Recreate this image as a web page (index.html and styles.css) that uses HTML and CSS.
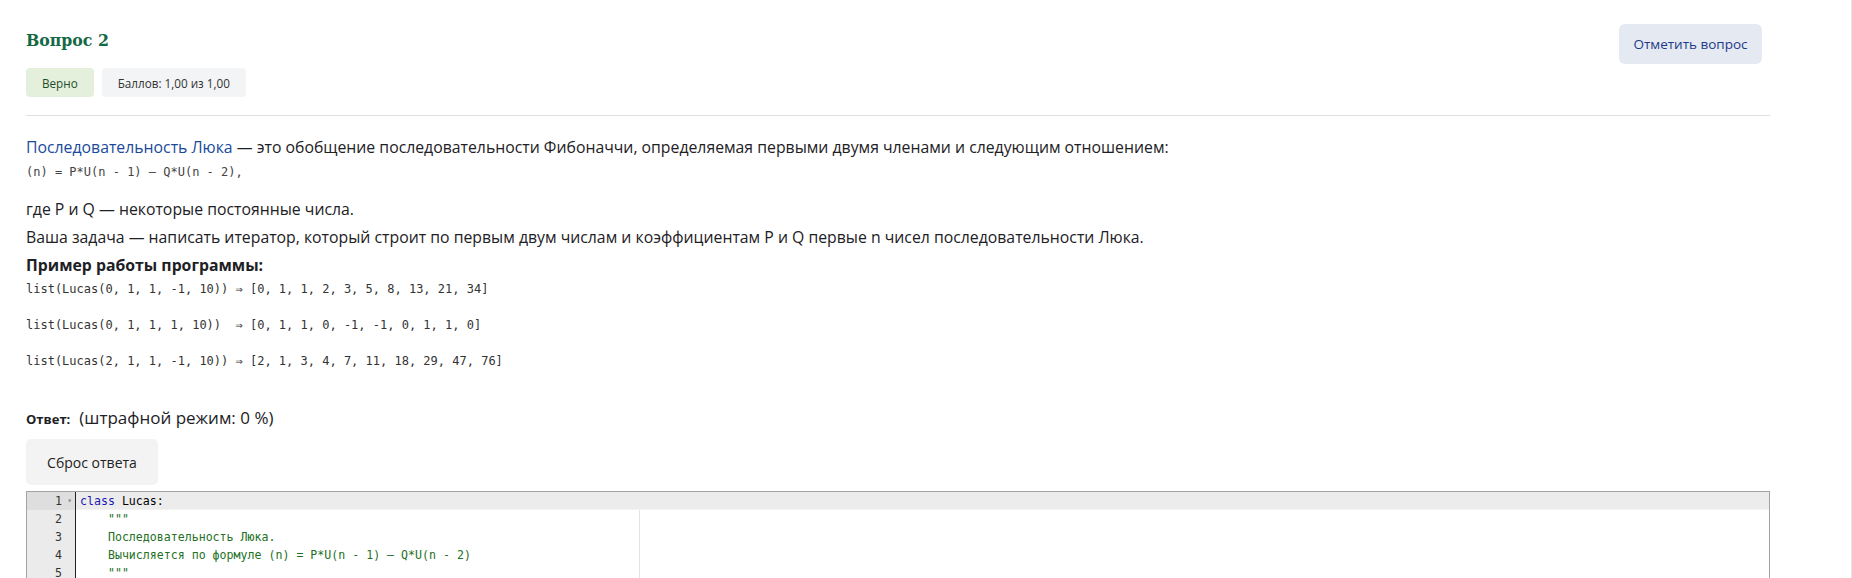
FILE: index.html
```html
<!DOCTYPE html>
<html lang="ru">
<head>
<meta charset="utf-8">
<title>Вопрос 2</title>
<link rel="stylesheet" href="styles.css">
</head>
<body>
<div class="page">
  <div class="que-header">
    <div class="que-info">
      <h3 class="que-title">Вопрос 2</h3>
      <div class="badges">
        <span class="badge badge-correct">Верно</span>
        <span class="badge badge-grade">Баллов: 1,00 из 1,00</span>
      </div>
    </div>
    <button class="flag-btn" type="button">Отметить вопрос</button>
  </div>
  <div class="divider"></div>

  <div class="qtext">
    <p class="intro"><a class="link" href="#">Последовательность Люка</a> — это обобщение последовательности Фибоначчи, определяемая первыми двумя членами и следующим отношением:<br><code class="formula">(n) = P*U(n - 1) – Q*U(n - 2),</code></p>
    <p class="line first">где P и Q — некоторые постоянные числа.</p>
    <p class="line">Ваша задача — написать итератор, который строит по первым двум числам и коэффициентам P и Q первые n чисел последовательности Люка.</p>
    <p class="line strong">Пример работы программы:</p>
<pre class="examples">list(Lucas(0, 1, 1, -1, 10)) ⇒ [0, 1, 1, 2, 3, 5, 8, 13, 21, 34]

list(Lucas(0, 1, 1, 1, 10))  ⇒ [0, 1, 1, 0, -1, -1, 0, 1, 1, 0]

list(Lucas(2, 1, 1, -1, 10)) ⇒ [2, 1, 3, 4, 7, 11, 18, 29, 47, 76]</pre>
  </div>

  <div class="answer-label"><span class="answer-key">Ответ:</span><span class="answer-mode">(штрафной режим: 0 %)</span></div>
  <button class="reset-btn" type="button">Сброс ответа</button>

  <div class="editor">
    <div class="gutter">
      <div class="gl active">1<span class="fold">▾</span></div>
      <div class="gl">2</div>
      <div class="gl">3</div>
      <div class="gl">4</div>
      <div class="gl">5</div>
    </div>
    <div class="code">
      <div class="print-margin"></div>
      <div class="cl active"><span class="kw">class</span> Lucas:</div>
      <div class="cl"><span class="str">    """</span></div>
      <div class="cl"><span class="str">    Последовательность Люка.</span></div>
      <div class="cl"><span class="str">    Вычисляется по формуле (n) = P*U(n - 1) – Q*U(n - 2)</span></div>
      <div class="cl"><span class="str">    """</span></div>
    </div>
  </div>
</div>
</body>
</html>
```
FILE: styles.css
```css
html, body {
  margin: 0;
  padding: 0;
  background: #fff;
}

body {
  font-family: "Open Sans", "Noto Sans", sans-serif;
  color: #1d2125;
}

.page {
  min-height: 100vh;
  box-sizing: border-box;
  padding: 24px 82px 0 26px;
  box-shadow: inset -1px 0 0 #e6e6e6;
}

.que-header {
  display: flex;
  justify-content: space-between;
  align-items: flex-start;
}

.que-title {
  margin: 4px 0 0;
  font-family: "DejaVu Serif Condensed", "DejaVu Serif", serif;
  font-stretch: condensed;
  font-weight: bold;
  font-size: 17.5px;
  line-height: 24px;
  color: #136943;
}

.badges {
  display: flex;
  gap: 8px;
  margin-top: 16px;
}

.badge {
  display: inline-flex;
  align-items: center;
  height: 29px;
  padding: 0 16px;
  border-radius: 4px;
  font-size: 11.7px;
}

.badge-correct {
  background: #e4f0dc;
  color: #1f4d2c;
}

.badge-grade {
  background: #f3f4f5;
  color: #333;
}

.flag-btn {
  margin-right: 8px;
  height: 40px;
  width: 143px;
  border: none;
  border-radius: 6px;
  background: #e4e9f2;
  color: #1f3a86;
  font-family: "Open Sans", sans-serif;
  font-size: 13.5px;
  padding: 0;
}

.divider {
  margin-top: 18px;
  border-top: 1px solid #dee2e6;
}

.qtext {
  margin-top: 20px;
  font-size: 15.8px;
}

.qtext p {
  margin: 0;
}

.intro {
  line-height: 23px;
}

.link {
  color: #1a4a9a;
  text-decoration: none;
}

.formula {
  font-family: "DejaVu Sans Mono", monospace;
  font-size: 12px;
  color: #444;
}

.line {
  line-height: 28px;
}

.qtext .line.first {
  margin-top: 11px;
}

.strong {
  font-weight: bold;
}

.examples {
  margin: 1px 0 0;
  font-family: "DejaVu Sans Mono", monospace;
  font-size: 12px;
  line-height: 18px;
  color: #333;
}

.answer-label {
  margin-top: 36px;
  line-height: 24px;
  display: flex;
  align-items: baseline;
  gap: 9px;
}

.answer-key {
  font-weight: bold;
  font-size: 13px;
}

.answer-mode {
  font-size: 17px;
}

.reset-btn {
  display: block;
  margin-top: 8px;
  height: 46px;
  width: 132px;
  padding: 0;
  border: none;
  border-radius: 5px;
  background: #f3f3f3;
  color: #222;
  font-family: "Open Sans", sans-serif;
  font-size: 14px;
}

.editor {
  margin-top: 6px;
  display: flex;
  border: 1px solid #a3a3a3;
  border-bottom: none;
  min-height: 200px;
  font-family: "DejaVu Sans Mono", monospace;
  font-size: 11.6px;
  line-height: 18px;
}

.gutter {
  width: 48px;
  background: #ebebeb;
  border-right: 1px solid #222;
  color: #333;
}

.gl {
  height: 18px;
  text-align: right;
  padding-right: 13px;
  position: relative;
}

.gl.active {
  background: #dedede;
}

.fold {
  position: absolute;
  right: 3px;
  top: 0;
  font-size: 8px;
  color: #888;
}

.code {
  flex: 1;
  position: relative;
}

.print-margin {
  position: absolute;
  top: 0;
  bottom: 0;
  left: 563px;
  width: 1px;
  background: #e3e3e3;
}

.cl {
  height: 18px;
  padding-left: 4px;
  white-space: pre;
  color: #000;
  position: relative;
}

.cl.active {
  background: #ececec;
  box-shadow: inset 0 -1px 0 #f2f2f2;
}

.kw {
  color: #1a1ab0;
}

.str {
  color: #247024;
}
```
